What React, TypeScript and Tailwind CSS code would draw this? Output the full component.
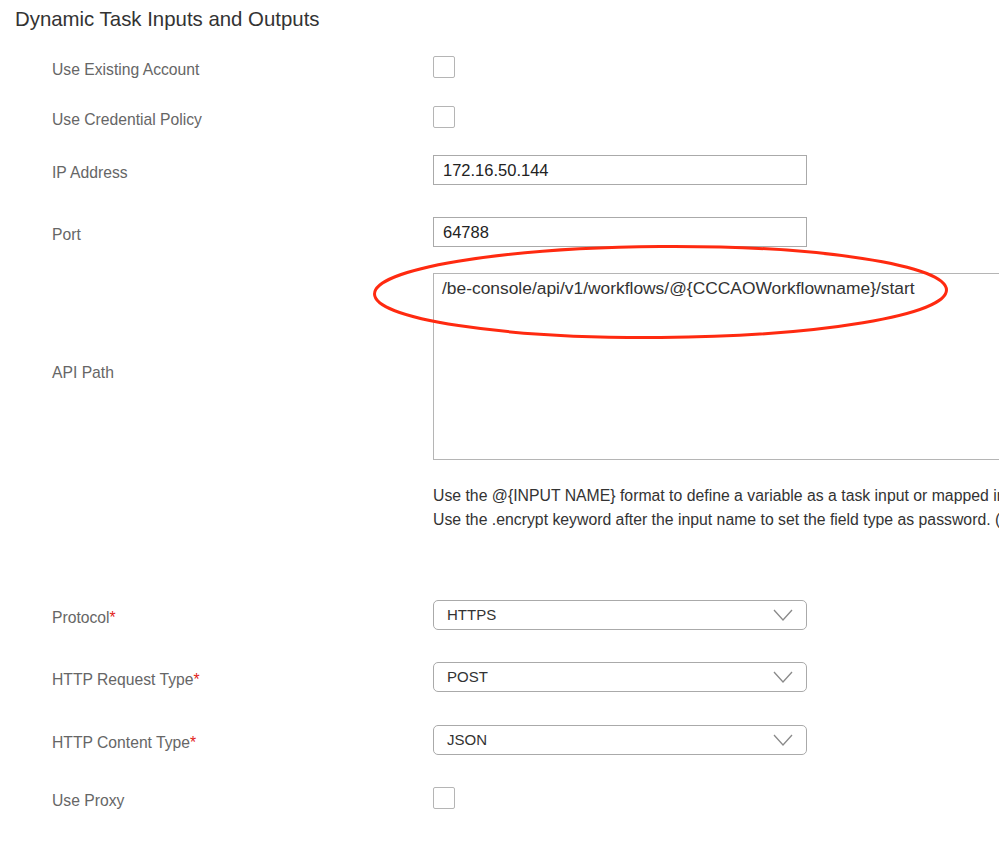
import React from "react";

const font = { fontFamily: '"Liberation Sans", Arial, sans-serif' };

function Checkbox() {
  return <div className="w-[22px] h-[22px] border-[1.5px] border-[#b5b5b5] rounded-[2px] bg-white" />;
}

function Label({ children, req }: { children: React.ReactNode; req?: boolean }) {
  return (
    <div className="w-[381px] shrink-0 pt-[6px] text-[15.7px] text-[#666]">
      {children}
      {req && <span className="text-[#e2231a]">*</span>}
    </div>
  );
}

function TextInput({ value }: { value: string }) {
  return (
    <div className="w-[374px] h-[30px] border border-[#aaa] bg-white flex items-center pl-[9px] text-[16.5px] text-[#222]">
      {value}
    </div>
  );
}

function Select({ value }: { value: string }) {
  return (
    <div className="w-[374px] h-[30px] border border-[#aaa] rounded-[5px] bg-white flex items-center justify-between pl-[13px] pr-[13px] text-[15px] text-[#333]">
      <span>{value}</span>
      <svg width="20" height="12" viewBox="0 0 20 12" fill="none">
        <path d="M1 1 L10 11 L19 1" stroke="#8a8a8a" strokeWidth="1.3" />
      </svg>
    </div>
  );
}

export default function App() {
  return (
    <div className="w-[999px] h-[847px] bg-white overflow-hidden relative" style={font}>
      <div className="h-[38px] pl-[15px] flex items-center text-[20.4px] text-[#333]">
        Dynamic Task Inputs and Outputs
      </div>
      <div className="pl-[52px] flex flex-col">
        <div className="mt-[18px] h-[22px] flex items-center">
          <Label>Use Existing Account</Label>
          <Checkbox />
        </div>
        <div className="mt-[28px] h-[22px] flex items-center">
          <Label>Use Credential Policy</Label>
          <Checkbox />
        </div>
        <div className="mt-[27px] h-[30px] flex items-center">
          <Label>IP Address</Label>
          <TextInput value="172.16.50.144" />
        </div>
        <div className="mt-[32px] h-[30px] flex items-center">
          <Label>Port</Label>
          <TextInput value="64788" />
        </div>
        <div className="mt-[26px] h-[187px] flex items-center">
          <div className="w-[381px] shrink-0 pt-[12px] text-[15.7px] text-[#666]">API Path</div>
          <div className="w-[620px] h-[187px] shrink-0 border border-[#b5b5b5] bg-white pl-[8px] pt-[3px] text-[17.4px] leading-[22px] text-[#333] whitespace-nowrap">
            /be-console/api/v1/workflows/@{"{"}CCCAOWorkflowname{"}"}/start
          </div>
        </div>
        <div className="mt-[24px] pl-[381px] text-[15.8px] leading-[24px] text-[#333] whitespace-nowrap">
          <div>Use the @{"{"}INPUT NAME{"}"} format to define a variable as a task input or mapped input.</div>
          <div>Use the .encrypt keyword after the input name to set the field type as password. (Example)</div>
        </div>
        <div className="mt-[68px] h-[30px] flex items-center">
          <Label req>Protocol</Label>
          <Select value="HTTPS" />
        </div>
        <div className="mt-[32px] h-[30px] flex items-center">
          <Label req>HTTP Request Type</Label>
          <Select value="POST" />
        </div>
        <div className="mt-[33px] h-[30px] flex items-center">
          <Label req>HTTP Content Type</Label>
          <Select value="JSON" />
        </div>
        <div className="mt-[32px] h-[22px] flex items-center">
          <Label>Use Proxy</Label>
          <Checkbox />
        </div>
      </div>
      <svg className="absolute left-0 top-0 pointer-events-none" width="999" height="847">
        <ellipse cx="660.5" cy="292" rx="286" ry="45.5" fill="none" stroke="#ff2a10" strokeWidth="3" transform="rotate(-0.4 660.5 292)" />
      </svg>
    </div>
  );
}
